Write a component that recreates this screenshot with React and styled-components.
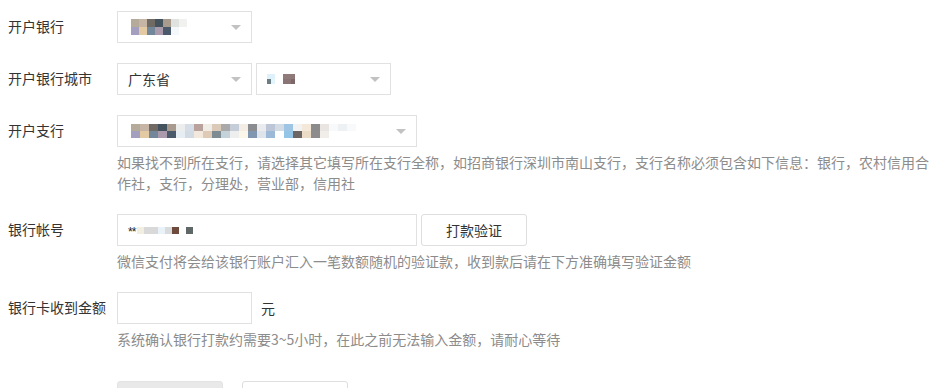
import React from "react";
import styled, { createGlobalStyle } from "styled-components";

const GlobalStyle = createGlobalStyle`
  html, body {
    margin: 0;
    padding: 0;
    background: #fff;
  }
  body {
    font-family: "Liberation Sans", "Noto Sans CJK SC", sans-serif;
    font-size: 14px;
    color: #333;
  }
`;

const bankMosaic = [
  ["#b5ab9b", "#c6b4a4", "#6f6a63", "#44525e", "#a89a8c", "#dfe2df", "#f1f2f0"],
  ["#a59fbf", "#e3caa3", "#72889a", "#aa9aab", "#4a5a6a", "#f4f8fb", "#ffffff"],
];

const cityMosaic = [
  ["#dff1fa", "#dff1fa", "#ffffff", "#ffffff", "#917a7a", "#917a7a", "#8f7878"],
  ["#6d7d84", "#e2f4fc", "#ffffff", "#ffffff", "#8b7475", "#8b7475", "#7c6869"],
];

const branchMosaic = [
  [
    "#b5ab9b", "#c6b4a4", "#6f6a63", "#44525e", "#a89a8c", "#eceeee", "#d6dde6",
    "#b9a29c", "#f0ede6", "#dccab8", "#a9a9a9", "#c5ced8", "#f3ede6", "#8a8c90",
    "#e9ebee", "#bcc6d7", "#d3dbe5", "#9ec5e4", "#f2f2f2", "#f4e8d8", "#8b8b8b",
    "#e8e5e2", "#f7f9fb", "#eef1f4", "#f8f9fa",
  ],
  [
    "#a59fbf", "#e3caa3", "#72889a", "#aa9aab", "#4a5a6a", "#e6edf3", "#d2dae3",
    "#f2e8dc", "#dfcbb5", "#7d8b92", "#c4d2d9", "#eeeeee", "#fbf6ea", "#8096b0",
    "#dfe4ea", "#9cbad8", "#ffffff", "#94c4e6", "#6c6563", "#ebdcc8", "#8c8c8c",
    "#f1eeea", "#ffffff", "#ffffff", "#ffffff",
  ],
];

const accountMosaic = [
  ["#f2eee2", "#d9d9d9", "#d9d9d9", "#e9f2f8", "#d9dbdc", "#6e4b3c", "#ffffff", "#606767"],
];

const Page = styled.div`
  padding: 11px 0 0 8px;
  display: flex;
  flex-direction: column;
  gap: 20px;
`;

const Row = styled.div`
  display: flex;
  align-items: flex-start;
`;

const Label = styled.div`
  width: 109px;
  flex-shrink: 0;
  line-height: 30px;
  font-size: 14px;
  color: #333;
  font-family: "Noto Sans CJK SC", sans-serif;
`;

const Field = styled.div`
  display: flex;
  flex-direction: column;
  gap: 5px;
`;

const Controls = styled.div`
  display: flex;
  align-items: center;
  gap: 4px;
`;

const Select = styled.div`
  box-sizing: border-box;
  width: ${(p) => p.$width}px;
  height: 32px;
  border: 1px solid #e1e1e1;
  background: #fff;
  display: flex;
  align-items: center;
  padding: 0 10px 0 ${(p) => p.$padLeft ?? 10}px;
`;

const SelectText = styled.span`
  font-family: "Noto Sans CJK SC", sans-serif;
  font-size: 14px;
  color: #333;
  flex: 1;
`;

const Arrow = styled.span`
  width: 0;
  height: 0;
  border-left: 5px solid transparent;
  border-right: 5px solid transparent;
  border-top: 5px solid #c2c2c2;
  margin-left: auto;
  flex-shrink: 0;
`;

const Input = styled.div`
  box-sizing: border-box;
  width: ${(p) => p.$width}px;
  height: 32px;
  border: 1px solid #e1e1e1;
  background: #fff;
  display: flex;
  align-items: center;
  padding-left: 10px;
  gap: 2px;
`;

const Stars = styled.span`
  font-family: "Liberation Sans", sans-serif;
  font-size: 12px;
  color: #222;
  letter-spacing: -1px;
  line-height: 1;
  margin-top: 3px;
`;

const Button = styled.button`
  box-sizing: border-box;
  width: 106px;
  height: 32px;
  border: 1px solid ${(p) => (p.$gray ? "#e3e3e3" : "#dedede")};
  border-radius: 3px;
  background: ${(p) => (p.$gray ? "#e9e9e9" : "#fff")};
  font-family: "Noto Sans CJK SC", sans-serif;
  font-size: 14px;
  color: #333;
  padding: 0;
  cursor: pointer;
`;

const Unit = styled.span`
  margin-left: 5px;
  font-family: "Noto Sans CJK SC", sans-serif;
  font-size: 14px;
  color: #333;
`;

const Hint = styled.div`
  width: 815px;
  font-family: "Noto Sans CJK SC", sans-serif;
  font-size: 14px;
  line-height: 21px;
  color: #8c8c8c;
`;

const Actions = styled.div`
  display: flex;
  gap: 19px;
  padding-left: 109px;
  margin-top: 11px;
`;

const MosaicGrid = styled.div`
  display: flex;
  flex-direction: column;
`;

const MosaicRow = styled.div`
  display: flex;
`;

const Cell = styled.span`
  display: block;
  width: ${(p) => p.$size}px;
  height: ${(p) => p.$h}px;
`;

const Mosaic = ({ rows, size = 8, h = 7 }) => (
  <MosaicGrid>
    {rows.map((row, i) => (
      <MosaicRow key={i}>
        {row.map((c, j) => (
          <Cell key={j} $size={size} $h={h} style={{ background: c }} />
        ))}
      </MosaicRow>
    ))}
  </MosaicGrid>
);

export default function App() {
  return (
    <>
      <GlobalStyle />
      <Page>
        <Row>
          <Label>开户银行</Label>
          <Controls>
            <Select $width={135} $padLeft={13}>
              <Mosaic rows={bankMosaic} h={8} />
              <Arrow />
            </Select>
          </Controls>
        </Row>

        <Row>
          <Label>开户银行城市</Label>
          <Controls>
            <Select $width={135}>
              <SelectText>广东省</SelectText>
              <Arrow />
            </Select>
            <Select $width={135}>
              <Mosaic rows={cityMosaic} size={4} h={5} />
              <Arrow />
            </Select>
          </Controls>
        </Row>

        <Row>
          <Label>开户支行</Label>
          <Field>
            <Controls>
              <Select $width={300} $padLeft={13}>
                <Mosaic rows={branchMosaic} size={9} h={7} />
                <Arrow />
              </Select>
            </Controls>
            <Hint>
              如果找不到所在支行，请选择其它填写所在支行全称，如招商银行深圳市南山支行，支行名称必须包含如下信息：银行，农村信用合作社，支行，分理处，营业部，信用社
            </Hint>
          </Field>
        </Row>

        <Row>
          <Label>银行帐号</Label>
          <Field>
            <Controls>
              <Input $width={300}>
                <Stars>**</Stars>
                <Mosaic rows={accountMosaic} size={7} h={7} />
              </Input>
              <Button>打款验证</Button>
            </Controls>
            <Hint>微信支付将会给该银行账户汇入一笔数额随机的验证款，收到款后请在下方准确填写验证金额</Hint>
          </Field>
        </Row>

        <Row>
          <Label>银行卡收到金额</Label>
          <Field>
            <Controls>
              <Input $width={135} />
              <Unit>元</Unit>
            </Controls>
            <Hint>系统确认银行打款约需要3~5小时，在此之前无法输入金额，请耐心等待</Hint>
          </Field>
        </Row>

        <Actions>
          <Button $gray aria-label="提交" />
          <Button aria-label="取消" />
        </Actions>
      </Page>
    </>
  );
}
